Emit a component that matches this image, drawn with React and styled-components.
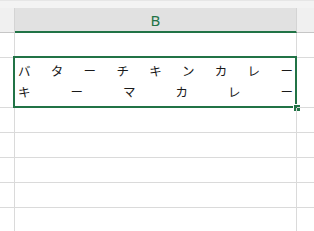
import React from "react";
import styled, { createGlobalStyle } from "styled-components";

const GlobalStyle = createGlobalStyle`
  html, body {
    margin: 0;
    padding: 0;
    background: #ffffff;
  }
  body {
    font-family: "Noto Sans CJK JP", "Noto Sans", sans-serif;
  }
`;

const lines = [
  ["バ", "タ", "ー", "チ", "キ", "ン", "カ", "レ", "ー"],
  ["キ", "ー", "マ", "カ", "レ", "ー"],
];

function App() {
  return (
    <Sheet>
      <GlobalStyle />
      <TopStrip />
      <Grid>
        <HeaderCell />
        <HeaderCell selected>B</HeaderCell>
        <HeaderCell last />

        <Cell />
        <Cell />
        <Cell last />

        <Cell tall />
        <Cell tall>
          <Distributed>
            {lines.map((line, i) => (
              <Line key={i}>
                {line.map((ch, j) => (
                  <span key={j}>{ch}</span>
                ))}
              </Line>
            ))}
          </Distributed>
          <Selection>
            <FillHandle />
          </Selection>
        </Cell>
        <Cell tall last />

        {[0, 1, 2, 3, 4].map((r) => (
          <React.Fragment key={r}>
            <Cell />
            <Cell />
            <Cell last />
          </React.Fragment>
        ))}
      </Grid>
    </Sheet>
  );
}

export default App;

const Sheet = styled.div`
  width: 314px;
  height: 231px;
  overflow: hidden;
  background: #ffffff;
`;

const TopStrip = styled.div`
  height: 8px;
  background: #f3f3f3;
  border-top: 1px solid #e6e6e6;
  box-sizing: border-box;
`;

const Grid = styled.div`
  display: grid;
  grid-template-columns: 15px 282px 1fr;
`;

const HeaderCell = styled.div`
  height: 25px;
  box-sizing: border-box;
  display: flex;
  align-items: center;
  justify-content: center;
  background: ${(p) => (p.selected ? "#e1e1e1" : "#f0f0f0")};
  border-bottom: ${(p) => (p.selected ? "2px solid #217346" : "1px solid #c6c6c6")};
  border-right: ${(p) => (p.last ? "none" : "1px solid #d4d4d4")};
  color: #217346;
  font-family: "Noto Sans", "Liberation Sans", sans-serif;
  font-size: 15px;
  padding-top: 1px;
`;

const Cell = styled.div`
  position: relative;
  height: ${(p) => (p.tall ? "50px" : "25px")};
  box-sizing: border-box;
  border-bottom: 1px solid #dadada;
  border-right: ${(p) => (p.last ? "none" : "1px solid #dadada")};
`;

const Distributed = styled.div`
  padding: 2px 3px 0 3px;
  font-size: 12.5px;
  line-height: 21px;
  color: #1a1a1a;
`;

const Line = styled.div`
  display: flex;
  justify-content: space-between;
`;

const Selection = styled.div`
  position: absolute;
  left: -2px;
  top: -2px;
  right: -1px;
  bottom: -1px;
  border: 2px solid #217346;
  pointer-events: none;
`;

const FillHandle = styled.div`
  position: absolute;
  right: -5px;
  bottom: -5px;
  width: 6px;
  height: 6px;
  background: #217346;
  border-left: 1px solid #ffffff;
  border-top: 1px solid #ffffff;
`;
